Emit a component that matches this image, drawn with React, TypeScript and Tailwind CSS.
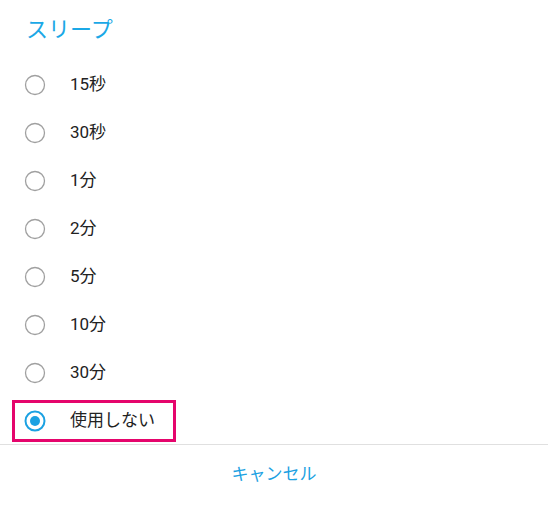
import React from "react";

const items = ["15秒", "30秒", "1分", "2分", "5分", "10分", "30分", "使用しない"];
const font = { fontFamily: 'Roboto, "Noto Sans CJK JP", sans-serif' };

function Radio({ checked }: { checked: boolean }) {
  return (
    <svg width="22" height="22" viewBox="0 0 22 22">
      {checked ? (
        <>
          <circle cx="11" cy="11" r="9.5" fill="none" stroke="#1ba1e2" strokeWidth="2" />
          <circle cx="11" cy="11" r="5" fill="#1ba1e2" />
        </>
      ) : (
        <circle cx="11" cy="11" r="9.5" fill="none" stroke="#a0a0a0" strokeWidth="1.3" />
      )}
    </svg>
  );
}

export default function App() {
  return (
    <div className="w-[548px] h-[505px] bg-white flex flex-col" style={font}>
      <div className="h-[60px] pl-[26px] pt-[15px] text-[22px] leading-[30px] text-[#1ba8e6]">スリープ</div>
      <div className="flex flex-col">
        {items.map((t, i) => {
          const sel = i === items.length - 1;
          return (
            <div key={t} className="h-[48px] flex items-center pl-[12px] pt-px">
              <div
                className={
                  sel
                    ? "h-[42px] w-[164px] flex items-center pl-[9px] border-[3px] border-[#e5056c]"
                    : "h-[42px] flex items-center pl-[12px]"
                }
              >
                <Radio checked={sel} />
                <span className="ml-[24px] text-[17px] text-[#222]">{t}</span>
              </div>
            </div>
          );
        })}
      </div>
      <div className="h-px bg-[#e0e0e0]" />
      <div className="h-[60px] flex items-center justify-center text-[17px] text-[#1ba1e2]">キャンセル</div>
    </div>
  );
}
